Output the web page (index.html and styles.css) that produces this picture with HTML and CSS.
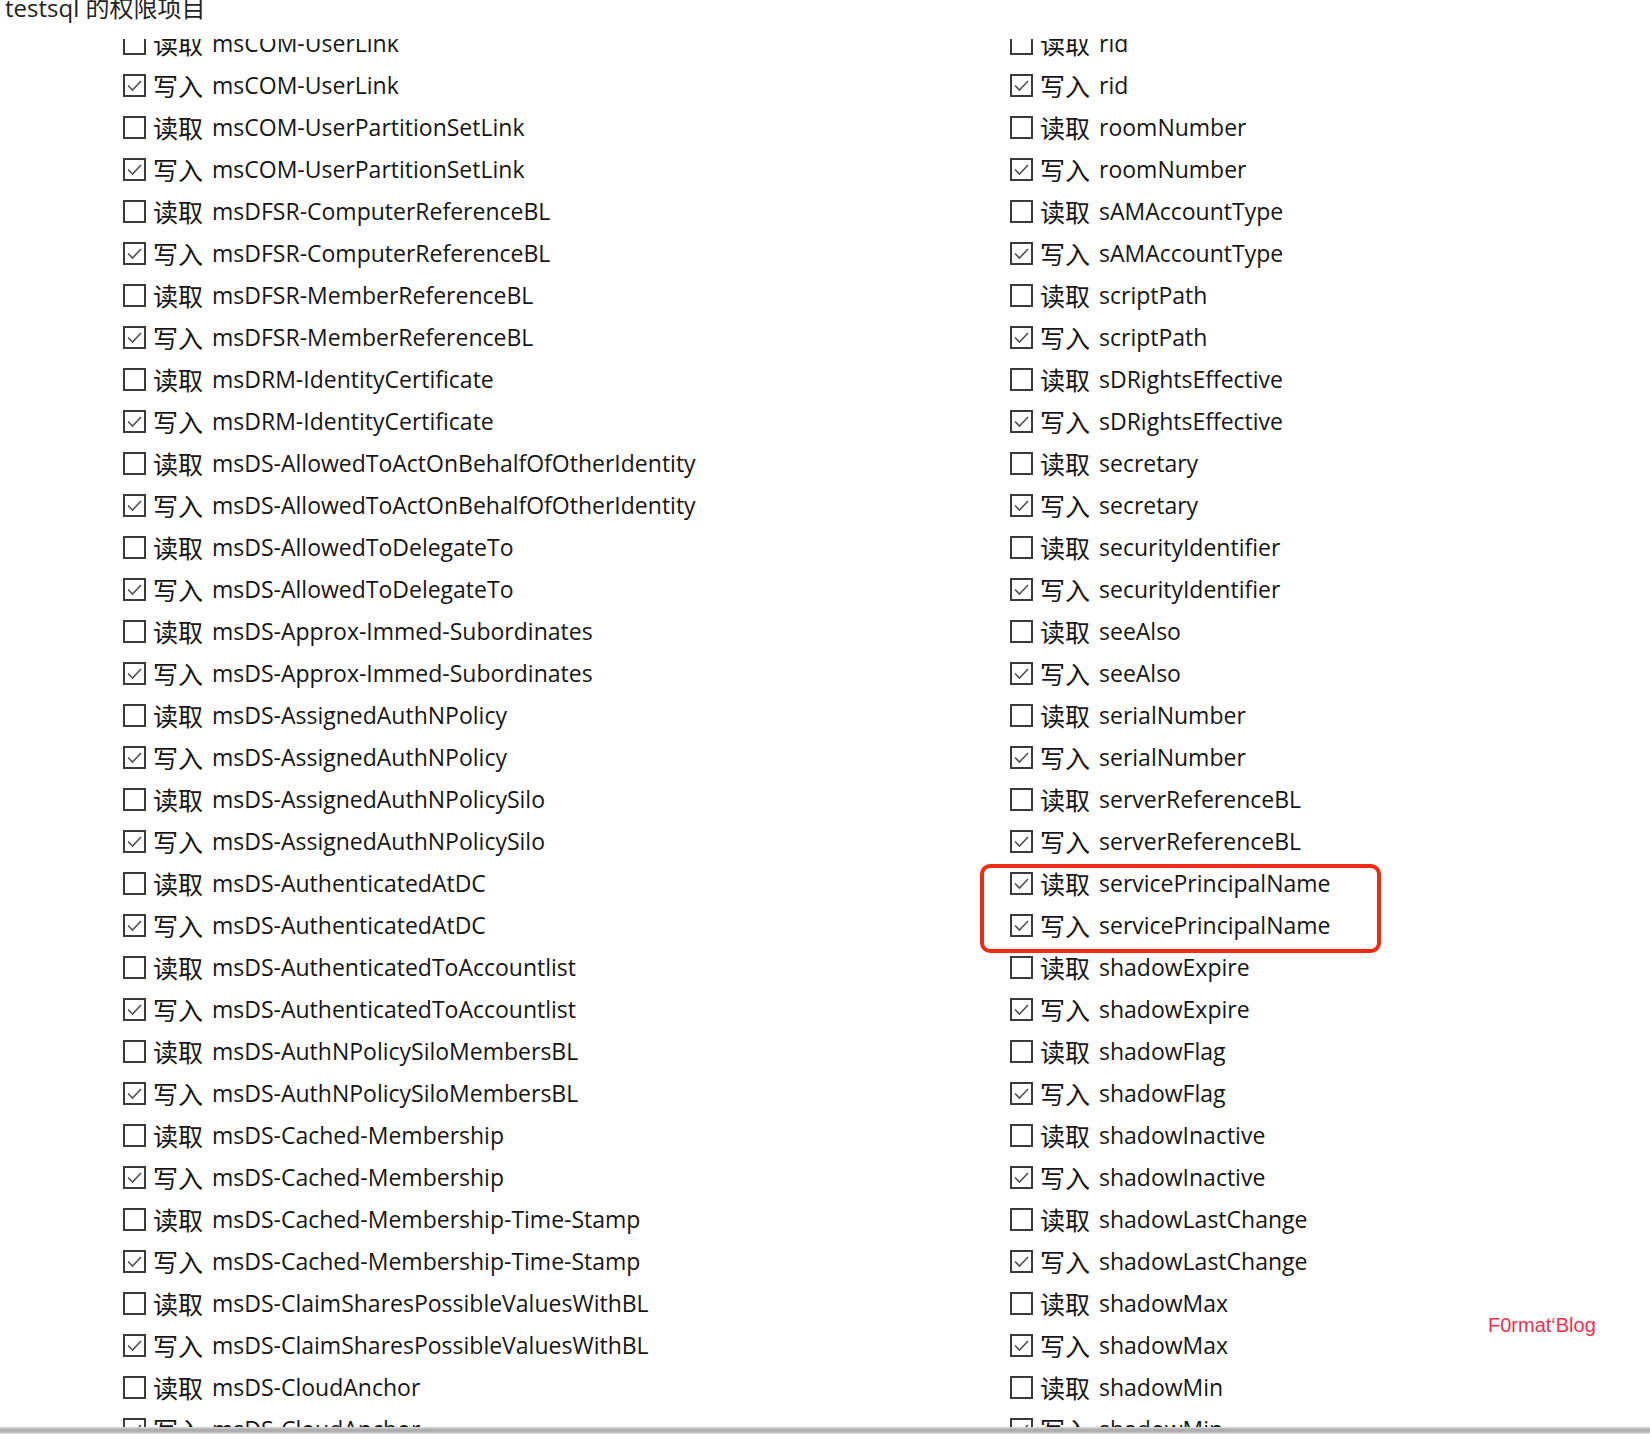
FILE: index.html
```html
<!DOCTYPE html>
<html lang="zh-CN">
<head>
    <meta charset="utf-8">
    <title>testsql 的权限项目</title>
    <link rel="stylesheet" href="styles.css">
</head>
<body>
    <div class="title">testsql 的权限项目</div>
    <div class="perm-list">
        <div class="perm-grid">
            <div class="perm-col">
                <label class="item"><span class="box"></span><span class="op">读取</span>msCOM-UserLink</label>
                <label class="item"><span class="box on"></span><span class="op">写入</span>msCOM-UserLink</label>
                <label class="item"><span class="box"></span><span class="op">读取</span>msCOM-UserPartitionSetLink</label>
                <label class="item"><span class="box on"></span><span class="op">写入</span>msCOM-UserPartitionSetLink</label>
                <label class="item"><span class="box"></span><span class="op">读取</span>msDFSR-ComputerReferenceBL</label>
                <label class="item"><span class="box on"></span><span class="op">写入</span>msDFSR-ComputerReferenceBL</label>
                <label class="item"><span class="box"></span><span class="op">读取</span>msDFSR-MemberReferenceBL</label>
                <label class="item"><span class="box on"></span><span class="op">写入</span>msDFSR-MemberReferenceBL</label>
                <label class="item"><span class="box"></span><span class="op">读取</span>msDRM-IdentityCertificate</label>
                <label class="item"><span class="box on"></span><span class="op">写入</span>msDRM-IdentityCertificate</label>
                <label class="item"><span class="box"></span><span class="op">读取</span>msDS-AllowedToActOnBehalfOfOtherIdentity</label>
                <label class="item"><span class="box on"></span><span class="op">写入</span>msDS-AllowedToActOnBehalfOfOtherIdentity</label>
                <label class="item"><span class="box"></span><span class="op">读取</span>msDS-AllowedToDelegateTo</label>
                <label class="item"><span class="box on"></span><span class="op">写入</span>msDS-AllowedToDelegateTo</label>
                <label class="item"><span class="box"></span><span class="op">读取</span>msDS-Approx-Immed-Subordinates</label>
                <label class="item"><span class="box on"></span><span class="op">写入</span>msDS-Approx-Immed-Subordinates</label>
                <label class="item"><span class="box"></span><span class="op">读取</span>msDS-AssignedAuthNPolicy</label>
                <label class="item"><span class="box on"></span><span class="op">写入</span>msDS-AssignedAuthNPolicy</label>
                <label class="item"><span class="box"></span><span class="op">读取</span>msDS-AssignedAuthNPolicySilo</label>
                <label class="item"><span class="box on"></span><span class="op">写入</span>msDS-AssignedAuthNPolicySilo</label>
                <label class="item"><span class="box"></span><span class="op">读取</span>msDS-AuthenticatedAtDC</label>
                <label class="item"><span class="box on"></span><span class="op">写入</span>msDS-AuthenticatedAtDC</label>
                <label class="item"><span class="box"></span><span class="op">读取</span>msDS-AuthenticatedToAccountlist</label>
                <label class="item"><span class="box on"></span><span class="op">写入</span>msDS-AuthenticatedToAccountlist</label>
                <label class="item"><span class="box"></span><span class="op">读取</span>msDS-AuthNPolicySiloMembersBL</label>
                <label class="item"><span class="box on"></span><span class="op">写入</span>msDS-AuthNPolicySiloMembersBL</label>
                <label class="item"><span class="box"></span><span class="op">读取</span>msDS-Cached-Membership</label>
                <label class="item"><span class="box on"></span><span class="op">写入</span>msDS-Cached-Membership</label>
                <label class="item"><span class="box"></span><span class="op">读取</span>msDS-Cached-Membership-Time-Stamp</label>
                <label class="item"><span class="box on"></span><span class="op">写入</span>msDS-Cached-Membership-Time-Stamp</label>
                <label class="item"><span class="box"></span><span class="op">读取</span>msDS-ClaimSharesPossibleValuesWithBL</label>
                <label class="item"><span class="box on"></span><span class="op">写入</span>msDS-ClaimSharesPossibleValuesWithBL</label>
                <label class="item"><span class="box"></span><span class="op">读取</span>msDS-CloudAnchor</label>
                <label class="item"><span class="box on"></span><span class="op">写入</span>msDS-CloudAnchor</label>
            </div>
            <div class="perm-col">
                <label class="item"><span class="box"></span><span class="op">读取</span>rid</label>
                <label class="item"><span class="box on"></span><span class="op">写入</span>rid</label>
                <label class="item"><span class="box"></span><span class="op">读取</span>roomNumber</label>
                <label class="item"><span class="box on"></span><span class="op">写入</span>roomNumber</label>
                <label class="item"><span class="box"></span><span class="op">读取</span>sAMAccountType</label>
                <label class="item"><span class="box on"></span><span class="op">写入</span>sAMAccountType</label>
                <label class="item"><span class="box"></span><span class="op">读取</span>scriptPath</label>
                <label class="item"><span class="box on"></span><span class="op">写入</span>scriptPath</label>
                <label class="item"><span class="box"></span><span class="op">读取</span>sDRightsEffective</label>
                <label class="item"><span class="box on"></span><span class="op">写入</span>sDRightsEffective</label>
                <label class="item"><span class="box"></span><span class="op">读取</span>secretary</label>
                <label class="item"><span class="box on"></span><span class="op">写入</span>secretary</label>
                <label class="item"><span class="box"></span><span class="op">读取</span>securityIdentifier</label>
                <label class="item"><span class="box on"></span><span class="op">写入</span>securityIdentifier</label>
                <label class="item"><span class="box"></span><span class="op">读取</span>seeAlso</label>
                <label class="item"><span class="box on"></span><span class="op">写入</span>seeAlso</label>
                <label class="item"><span class="box"></span><span class="op">读取</span>serialNumber</label>
                <label class="item"><span class="box on"></span><span class="op">写入</span>serialNumber</label>
                <label class="item"><span class="box"></span><span class="op">读取</span>serverReferenceBL</label>
                <label class="item"><span class="box on"></span><span class="op">写入</span>serverReferenceBL</label>
                <div class="marked">
                    <label class="item"><span class="box on"></span><span class="op">读取</span>servicePrincipalName</label>
                    <label class="item"><span class="box on"></span><span class="op">写入</span>servicePrincipalName</label>
                </div>
                <label class="item"><span class="box"></span><span class="op">读取</span>shadowExpire</label>
                <label class="item"><span class="box on"></span><span class="op">写入</span>shadowExpire</label>
                <label class="item"><span class="box"></span><span class="op">读取</span>shadowFlag</label>
                <label class="item"><span class="box on"></span><span class="op">写入</span>shadowFlag</label>
                <label class="item"><span class="box"></span><span class="op">读取</span>shadowInactive</label>
                <label class="item"><span class="box on"></span><span class="op">写入</span>shadowInactive</label>
                <label class="item"><span class="box"></span><span class="op">读取</span>shadowLastChange</label>
                <label class="item"><span class="box on"></span><span class="op">写入</span>shadowLastChange</label>
                <label class="item"><span class="box"></span><span class="op">读取</span>shadowMax</label>
                <label class="item"><span class="box on"></span><span class="op">写入</span>shadowMax</label>
                <label class="item"><span class="box"></span><span class="op">读取</span>shadowMin</label>
                <label class="item"><span class="box on"></span><span class="op">写入</span>shadowMin</label>
            </div>
        </div>
        <div class="watermark">F0rmat‘Blog</div>
    </div>
    <div class="bottom-edge"></div>
</body>
</html>
```

FILE: styles.css
```css
html, body {
    margin: 0;
    background: #fff;
}
body {
    width: 1650px;
    height: 1434px;
    overflow: hidden;
    color: #151515;
    font-family: "Open Sans", "Noto Sans CJK SC", sans-serif;
}
.title {
    height: 39px;
    padding-left: 5px;
    font-size: 24px;
    line-height: 16px;
    color: #222;
    white-space: nowrap;
}
.perm-list {
    position: relative;
    height: 1388px;
    overflow: hidden;
}
.perm-grid {
    display: grid;
    grid-template-columns: 887px 1fr;
    margin-top: -17px;
    padding-left: 123px;
}
.perm-col {
    display: flex;
    flex-direction: column;
}
.item {
    display: flex;
    align-items: center;
    height: 42px;
    font-size: 23px;
    white-space: nowrap;
}
.box {
    flex: none;
    width: 19px;
    height: 19px;
    margin-right: 7px;
    border: 2px solid #3a3a3a;
    background: #fff;
}
.box.on {
    background-image: url("data:image/svg+xml,%3Csvg xmlns='http://www.w3.org/2000/svg' viewBox='0 0 19 19'%3E%3Cpolyline points='3,9.5 7.5,14 16,5' fill='none' stroke='%23555' stroke-width='1.7'/%3E%3C/svg%3E");
}
.op {
    margin-right: 9px;
    font-family: "Noto Sans CJK SC", sans-serif;
    font-size: 25px;
}
.marked {
    position: relative;
}
.marked::after {
    content: "";
    position: absolute;
    left: -30px;
    top: 2px;
    width: 393px;
    height: 81px;
    border: 4px solid #ef2b14;
    border-radius: 10px;
}
.watermark {
    position: absolute;
    left: 1488px;
    top: 1275px;
    font-family: "Liberation Sans", Arial, sans-serif;
    font-size: 20px;
    color: #ef2f4b;
}
.bottom-edge {
    height: 7px;
    background: linear-gradient(#dcdcdc, #a9a9a9 40%, #b4b4b4 70%, #e6e6e6);
}
```
